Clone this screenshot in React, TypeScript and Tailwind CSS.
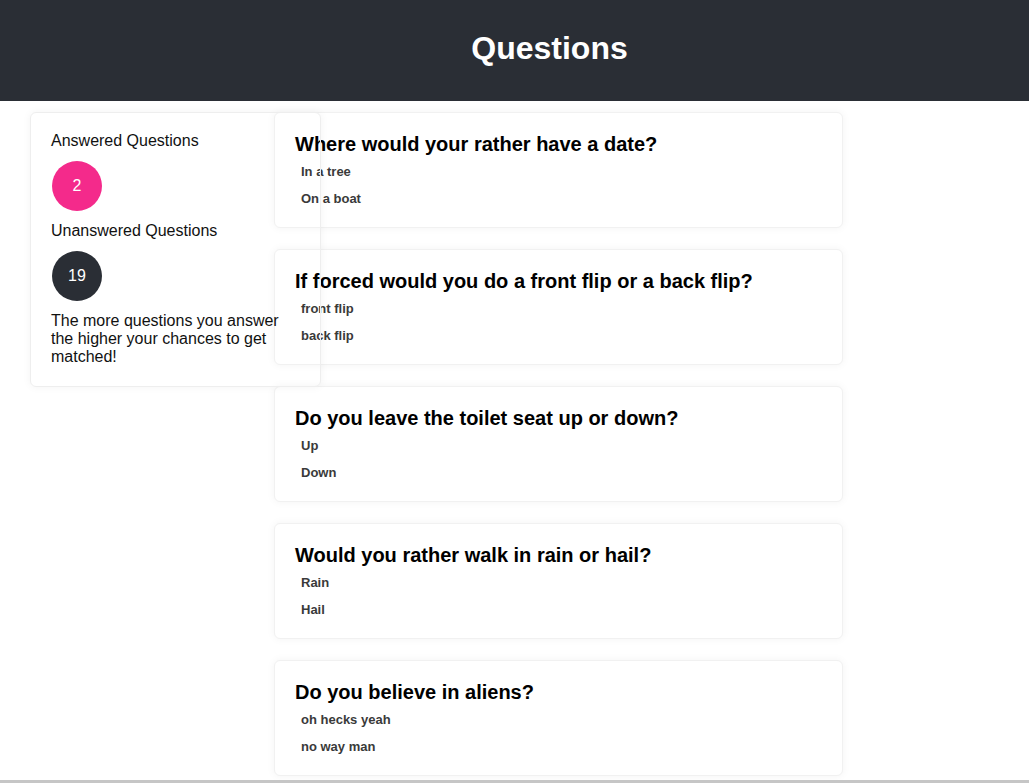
const questions = [
  { title: "Where would your rather have a date?", answers: ["In a tree", "On a boat"] },
  { title: "If forced would you do a front flip or a back flip?", answers: ["front flip", "back flip"] },
  { title: "Do you leave the toilet seat up or down?", answers: ["Up", "Down"] },
  { title: "Would you rather walk in rain or hail?", answers: ["Rain", "Hail"] },
  { title: "Do you believe in aliens?", answers: ["oh hecks yeah", "no way man"] },
];

function QuestionCard({ title, answers }: { title: string; answers: string[] }) {
  return (
    <div className="h-[116px] w-[569px] rounded-md border border-[#f1f1f1] bg-white px-5 pt-[19px] shadow-[0_0_8px_rgba(0,0,0,0.05)]">
      <h2 className="text-[20px] leading-6 font-bold text-black">{title}</h2>
      <div className="mt-[7px] flex flex-col gap-[9px] pl-[6px]">
        {answers.map((a) => (
          <p key={a} className="text-[13px] leading-[18px] font-semibold text-[#3a3a3a]">
            {a}
          </p>
        ))}
      </div>
    </div>
  );
}

function StatsCard() {
  return (
    <div className="relative z-10 h-[275px] w-[291px] shrink-0 rounded-md border border-[#eeeeee] bg-transparent px-5 pt-[18px] shadow-[0_0_8px_rgba(0,0,0,0.05)]">
      <p className="text-[16px] leading-5 font-light text-[#111]">Answered Questions</p>
      <div className="mt-[10px] ml-px flex h-[50px] w-[50px] items-center justify-center rounded-full bg-[#f42a8b] text-[16px] text-white">
        2
      </div>
      <p className="mt-[10px] text-[16px] leading-5 font-light text-[#111]">Unanswered Questions</p>
      <div className="mt-[10px] ml-px flex h-[50px] w-[50px] items-center justify-center rounded-full bg-[#2a2e35] text-[16px] text-white">
        19
      </div>
      <p className="mt-[11px] text-[16px] leading-[18px] font-light text-[#111]">
        The more questions you answer the higher your chances to get matched!
      </p>
    </div>
  );
}

export default function App() {
  return (
    <div className="min-h-screen bg-white font-['Liberation_Sans',Arial,sans-serif]">
      <header className="flex h-[101px] items-center justify-center bg-[#2a2e35] pb-[6px]">
        <h1 className="ml-[70px] text-[32px] font-bold text-white">Questions</h1>
      </header>
      <main className="flex items-start pt-[11px]">
        <div className="ml-[30px]">
          <StatsCard />
        </div>
        <div className="-ml-[47px] flex flex-col gap-[21px] pb-10">
          {questions.map((q) => (
            <QuestionCard key={q.title} title={q.title} answers={q.answers} />
          ))}
        </div>
      </main>
      <div className="fixed bottom-0 left-0 h-[3px] w-full bg-[#c6c6c6]" />
    </div>
  );
}
